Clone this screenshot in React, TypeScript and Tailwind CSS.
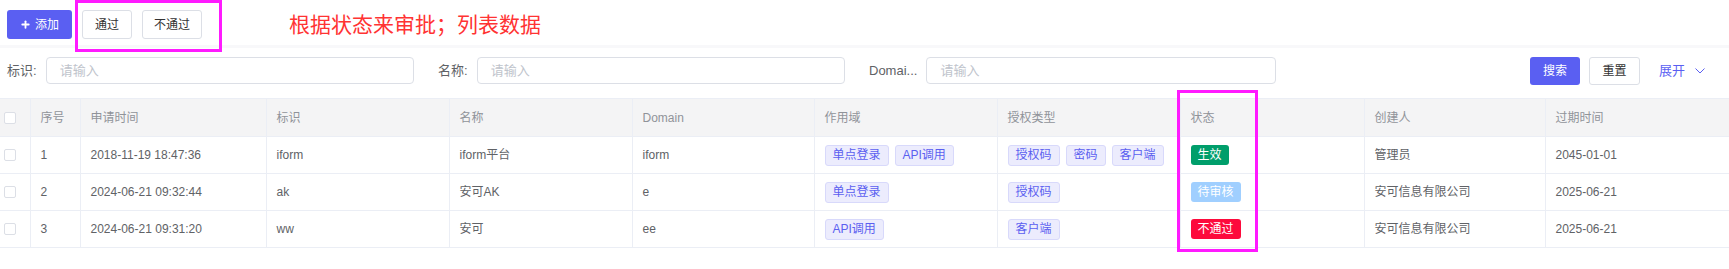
import { Plus } from "lucide-react"

const font = { fontFamily: '"Liberation Sans", "Noto Sans CJK SC", sans-serif' }

type Row = {
  no: number
  time: string
  code: string
  name: string
  domain: string
  scopes: string[]
  grants: string[]
  status: "ok" | "pending" | "reject"
  creator: string
  expire: string
}

const rows: Row[] = [
  {
    no: 1,
    time: "2018-11-19 18:47:36",
    code: "iform",
    name: "iform平台",
    domain: "iform",
    scopes: ["单点登录", "API调用"],
    grants: ["授权码", "密码", "客户端"],
    status: "ok",
    creator: "管理员",
    expire: "2045-01-01",
  },
  {
    no: 2,
    time: "2024-06-21 09:32:44",
    code: "ak",
    name: "安可AK",
    domain: "e",
    scopes: ["单点登录"],
    grants: ["授权码"],
    status: "pending",
    creator: "安可信息有限公司",
    expire: "2025-06-21",
  },
  {
    no: 3,
    time: "2024-06-21 09:31:20",
    code: "ww",
    name: "安可",
    domain: "ee",
    scopes: ["API调用"],
    grants: ["客户端"],
    status: "reject",
    creator: "安可信息有限公司",
    expire: "2025-06-21",
  },
]

const columns = [
  { title: "", w: "w-[30px]" },
  { title: "序号", w: "w-[50px]" },
  { title: "申请时间", w: "w-[186px]" },
  { title: "标识", w: "w-[183px]" },
  { title: "名称", w: "w-[183px]" },
  { title: "Domain", w: "w-[182px]" },
  { title: "作用域", w: "w-[183px]" },
  { title: "授权类型", w: "w-[183px]" },
  { title: "状态", w: "w-[184px]" },
  { title: "创建人", w: "w-[181px]" },
  { title: "过期时间", w: "w-[184px]" },
]

function Checkbox() {
  return <span className="block h-[12px] w-[12px] rounded-[2px] border border-[#dcdfe6] bg-white" />
}

function Tag({ text }: { text: string }) {
  return (
    <span className="inline-flex h-[21px] items-center rounded-[3px] border border-[#d8d9fb] bg-[#ececfd] px-[7px] text-[12px] text-[#5b5ff0]">
      {text}
    </span>
  )
}

function Status({ status }: { status: Row["status"] }) {
  if (status === "ok")
    return (
      <span className="inline-flex h-[20px] items-center rounded-[3px] bg-[#009e6b] px-[7px] text-[12px] text-white">
        生效
      </span>
    )
  if (status === "pending")
    return (
      <span className="inline-flex h-[20px] items-center rounded-[3px] bg-[#a0cfff] px-[7px] text-[12px] text-white">
        待审核
      </span>
    )
  return (
    <span className="inline-flex h-[20px] items-center rounded-[3px] bg-[#fd0a3c] px-[7px] text-[12px] text-white">
      不通过
    </span>
  )
}

function Field({ label }: { label: string }) {
  return (
    <div className="flex w-[407px] items-center gap-[9px]">
      <span className="whitespace-nowrap text-[13px] text-[#606266]">{label}</span>
      <div className="flex h-[27px] flex-1 items-center rounded-[4px] border border-[#dcdfe6] px-[13px] text-[13px] text-[#c0c4cc]">
        请输入
      </div>
    </div>
  )
}

export default function App() {
  return (
    <div className="relative w-[1729px] bg-white" style={font}>
      {/* toolbar */}
      <div className="flex h-[45px] items-start gap-[10px] pl-[7px] pt-[10px]">
        <button className="flex h-[29px] w-[65px] items-center justify-center gap-[4px] rounded-[3px] bg-[#5a5ff2] text-[12px] text-white">
          <Plus className="h-[11px] w-[11px]" strokeWidth={4} />
          添加
        </button>
        <button className="h-[29px] w-[50px] rounded-[3px] border border-[#dcdfe6] bg-white text-[12px] text-[#333]">
          通过
        </button>
        <button className="h-[29px] w-[60px] rounded-[3px] border border-[#dcdfe6] bg-white text-[12px] text-[#333]">
          不通过
        </button>
        <span className="ml-[77px] mt-[4px] text-[21px] leading-none text-[#ff3333]">根据状态来审批；列表数据</span>
      </div>
      <div className="h-[3px] bg-[#f8f8fa]" />

      {/* search */}
      <div className="flex h-[50px] items-start gap-[24px] pl-[7px] pr-[24px] pt-[9px]">
        <Field label="标识:" />
        <Field label="名称:" />
        <Field label="Domai..." />
        <div className="ml-auto flex items-center">
          <button className="h-[28px] w-[50px] rounded-[3px] bg-[#5a5ff2] text-[12px] text-white">搜索</button>
          <button className="ml-[9px] h-[28px] w-[51px] rounded-[3px] border border-[#dcdfe6] bg-white text-[12px] text-[#333]">
            重置
          </button>
          <span className="ml-[19px] text-[13px] text-[#5a5ff2]">展开</span>
          <svg className="ml-[10px]" width="10" height="6" viewBox="0 0 10 6" fill="none">
            <path d="M0.5 0.5 L5 5 L9.5 0.5" stroke="#5a5ff2" strokeWidth="1" />
          </svg>
        </div>
      </div>

      {/* table */}
      <table className="w-[1729px] table-fixed border-collapse text-[12px]">
        <thead>
          <tr className="h-[38px] border-y border-[#ebeef5] bg-[#f4f4f5]">
            {columns.map((c, i) => (
              <th
                key={i}
                className={`${c.w} border-l border-[#ebeef5] pl-[10px] text-left font-normal text-[#909399] first:border-l-0 first:pl-[4px]`}
              >
                {i === 0 ? <Checkbox /> : c.title}
              </th>
            ))}
          </tr>
        </thead>
        <tbody>
          {rows.map((r) => (
            <tr key={r.no} className="h-[37px] border-b border-[#ebeef5] text-[#606266]">
              <td className="pl-[4px]">
                <Checkbox />
              </td>
              <td className="border-l border-[#ebeef5] pl-[10px]">{r.no}</td>
              <td className="border-l border-[#ebeef5] pl-[10px]">{r.time}</td>
              <td className="border-l border-[#ebeef5] pl-[10px]">{r.code}</td>
              <td className="border-l border-[#ebeef5] pl-[10px]">{r.name}</td>
              <td className="border-l border-[#ebeef5] pl-[10px]">{r.domain}</td>
              <td className="border-l border-[#ebeef5] pl-[10px]">
                <div className="flex gap-[6px]">
                  {r.scopes.map((s) => (
                    <Tag key={s} text={s} />
                  ))}
                </div>
              </td>
              <td className="border-l border-[#ebeef5] pl-[10px]">
                <div className="flex gap-[6px]">
                  {r.grants.map((s) => (
                    <Tag key={s} text={s} />
                  ))}
                </div>
              </td>
              <td className="border-l border-[#ebeef5] pl-[10px]">
                <Status status={r.status} />
              </td>
              <td className="border-l border-[#ebeef5] pl-[10px]">{r.creator}</td>
              <td className="border-l border-[#ebeef5] pl-[10px]">{r.expire}</td>
            </tr>
          ))}
        </tbody>
      </table>
      <div className="h-[23px]" />

      {/* annotation boxes */}
      <div className="pointer-events-none absolute left-[75px] top-0 h-[52px] w-[147px] border-[3px] border-[#ff1aff]" />
      <div className="pointer-events-none absolute left-[1177px] top-[90px] h-[162px] w-[81px] border-[3px] border-[#ff1aff]" />
    </div>
  )
}
